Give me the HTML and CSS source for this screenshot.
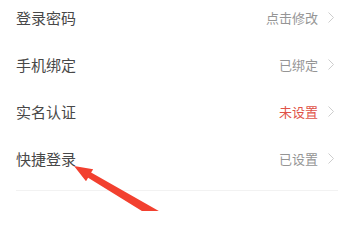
FILE: index.html
```html
<!DOCTYPE html>
<html lang="zh-CN">
<head>
<meta charset="utf-8">
<link rel="stylesheet" href="styles.css">
</head>
<body>
<div class="page">
  <ul class="list">
    <li class="row"><span class="label">登录密码</span><span class="value">点击修改<svg class="chev" viewBox="0 0 6 11" width="6" height="11"><polyline points="0.5,0.5 5.5,5.5 0.5,10.5"/></svg></span></li>
    <li class="row"><span class="label">手机绑定</span><span class="value">已绑定<svg class="chev" viewBox="0 0 6 11" width="6" height="11"><polyline points="0.5,0.5 5.5,5.5 0.5,10.5"/></svg></span></li>
    <li class="row"><span class="label">实名认证</span><span class="value warn">未设置<svg class="chev" viewBox="0 0 6 11" width="6" height="11"><polyline points="0.5,0.5 5.5,5.5 0.5,10.5"/></svg></span></li>
    <li class="row"><span class="label">快捷登录</span><span class="value">已设置<svg class="chev" viewBox="0 0 6 11" width="6" height="11"><polyline points="0.5,0.5 5.5,5.5 0.5,10.5"/></svg></span></li>
  </ul>
  <div class="divider"></div>
  <svg class="arrow" viewBox="0 0 355 211" width="355" height="211">
    <polygon points="74,166 93.2,169.2 91.1,172.6 162.7,213.2 158.1,221 88.1,177.8 86,181.3"/>
  </svg>
</div>
</body>
</html>
```
FILE: styles.css
```css
html, body {
  margin: 0;
  padding: 0;
  background: #ffffff;
}
.page {
  position: relative;
  width: 355px;
  height: 211px;
  overflow: hidden;
  font-family: "Noto Sans CJK SC", "Noto Sans", sans-serif;
}
.list {
  list-style: none;
  margin: -6px 0 0 0;
  padding: 0;
}
.row {
  display: flex;
  align-items: center;
  justify-content: space-between;
  height: 47px;
  padding: 0 21px 0 16px;
}
.label {
  font-size: 15px;
  color: #484848;
}
.value {
  display: flex;
  align-items: center;
  gap: 10px;
  font-size: 13px;
  color: #959595;
}
.value.warn {
  color: #e05248;
}
.chev {
  display: block;
}
.chev polyline {
  fill: none;
  stroke: #cdcdcd;
  stroke-width: 1;
}
.divider {
  margin: 8px 17px 0 16px;
  height: 1px;
  background: #f2f2f2;
}
.arrow {
  position: absolute;
  left: 0;
  top: 0;
}
.arrow polygon {
  fill: #f2402f;
}
```
